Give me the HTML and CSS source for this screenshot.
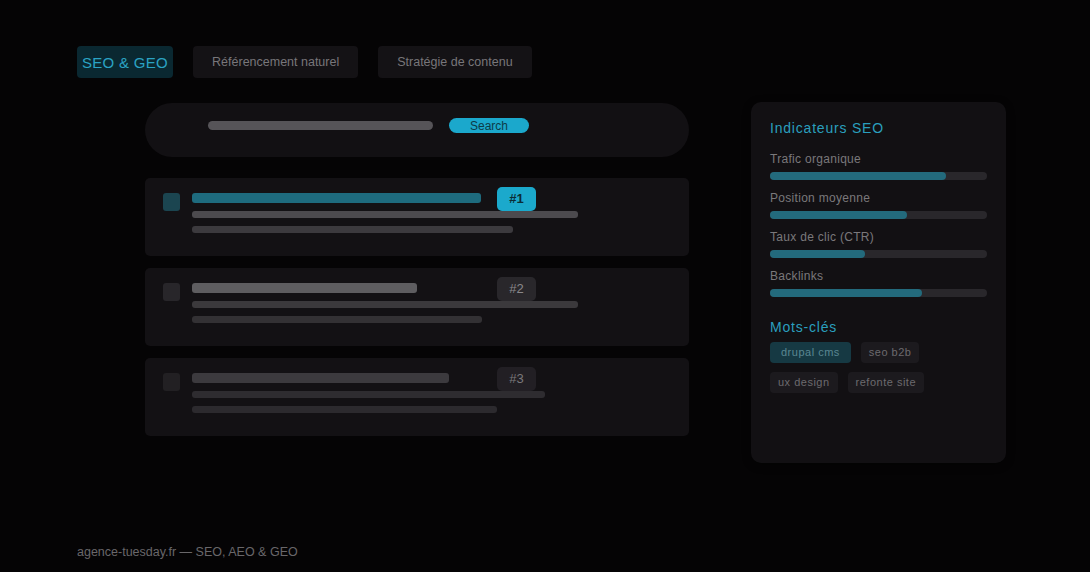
FILE: index.html
```html
<!DOCTYPE html>
<html lang="fr">
<head>
    <meta charset="UTF-8">
    <meta name="viewport" content="width=device-width, initial-scale=1.0">
    <title>SEO &amp; GEO — agence-tuesday.fr</title>
    <link rel="stylesheet" href="styles.css">
</head>
<body>
    <!-- Onglets -->
    <nav class="tabs">
        <span class="tab active">SEO &amp; GEO</span>
        <span class="tab">Référencement naturel</span>
        <span class="tab">Stratégie de contenu</span>
    </nav>

    <div class="layout">
        <!-- Résultats de recherche -->
        <main class="serp">
            <div class="searchbar">
                <span class="query"></span>
                <span class="search-btn">Search</span>
            </div>

            <div class="result first">
                <span class="favicon"></span>
                <div class="result-body">
                    <div class="result-head">
                        <span class="line title" style="width: 289px"></span>
                        <span class="rank">#1</span>
                    </div>
                    <span class="line desc" style="width: 386px"></span>
                    <span class="line desc2" style="width: 321px"></span>
                </div>
            </div>

            <div class="result second">
                <span class="favicon"></span>
                <div class="result-body">
                    <div class="result-head">
                        <span class="line title" style="width: 225px"></span>
                        <span class="rank">#2</span>
                    </div>
                    <span class="line desc" style="width: 386px"></span>
                    <span class="line desc2" style="width: 290px"></span>
                </div>
            </div>

            <div class="result third">
                <span class="favicon"></span>
                <div class="result-body">
                    <div class="result-head">
                        <span class="line title" style="width: 257px"></span>
                        <span class="rank">#3</span>
                    </div>
                    <span class="line desc" style="width: 353px"></span>
                    <span class="line desc2" style="width: 305px"></span>
                </div>
            </div>
        </main>

        <!-- Indicateurs -->
        <aside class="panel">
            <h3>Indicateurs SEO</h3>
            <div class="metrics">
                <div class="metric">
                    <span class="metric-label">Trafic organique</span>
                    <div class="bar"><div class="fill" style="width: 81%"></div></div>
                </div>
                <div class="metric">
                    <span class="metric-label">Position moyenne</span>
                    <div class="bar"><div class="fill" style="width: 63%"></div></div>
                </div>
                <div class="metric">
                    <span class="metric-label">Taux de clic (CTR)</span>
                    <div class="bar"><div class="fill" style="width: 44%"></div></div>
                </div>
                <div class="metric">
                    <span class="metric-label">Backlinks</span>
                    <div class="bar"><div class="fill" style="width: 70%"></div></div>
                </div>
            </div>

            <h3 class="keywords-title">Mots-clés</h3>
            <div class="tags">
                <span class="tag active">drupal cms</span>
                <span class="tag">seo b2b</span>
                <span class="tag">ux design</span>
                <span class="tag">refonte site</span>
            </div>
        </aside>
    </div>

    <footer>agence-tuesday.fr — SEO, AEO &amp; GEO</footer>
</body>
</html>
```

FILE: styles.css
```css
body {
    font-family: 'Liberation Sans', Arial, sans-serif;
    margin: 0;
    padding: 46px 0 0 77px;
    background: #050405;
    color: #7a787b;
    height: 100vh;
    box-sizing: border-box;
    display: flex;
    flex-direction: column;
    overflow: hidden;
}

/* Onglets */
.tabs {
    display: flex;
    gap: 20px;
}

.tab {
    height: 32px;
    padding: 0 19px;
    display: flex;
    align-items: center;
    border-radius: 4px;
    background: #141215;
    font-size: 12.5px;
    color: #78767a;
}

.tab.active {
    padding: 0 5px;
    background: #0a2831;
    font-size: 15px;
    letter-spacing: 0.3px;
    color: #2aa3c4;
}

.layout {
    display: flex;
    align-items: flex-start;
    gap: 62px;
    margin: 24px 0 0 68px;
}

/* Résultats */
.serp {
    width: 544px;
    display: flex;
    flex-direction: column;
    gap: 12px;
}

.searchbar {
    height: 54px;
    box-sizing: border-box;
    padding: 15px 0 0 63px;
    margin-top: 1px;
    margin-bottom: 9px;
    border-radius: 27px;
    background: #121013;
    display: flex;
    align-items: flex-start;
    gap: 16px;
}

.query {
    width: 225px;
    height: 9px;
    margin-top: 3px;
    border-radius: 5px;
    background: #565458;
}

.search-btn {
    width: 80px;
    height: 15px;
    border-radius: 8px;
    background: #1ba8cc;
    color: #0d3b48;
    font-size: 12px;
    line-height: 16px;
    text-align: center;
}

.result {
    height: 78px;
    box-sizing: border-box;
    padding: 9px 18px;
    border-radius: 5px;
    background: #131114;
    display: grid;
    grid-template-columns: 17px 1fr;
    gap: 12px;
}

.favicon {
    width: 17px;
    height: 18px;
    margin-top: 6px;
    border-radius: 3px;
    background: #28262a;
}

.result-body {
    display: flex;
    flex-direction: column;
}

.result-head {
    height: 24px;
    display: grid;
    grid-template-columns: 305px auto;
    align-items: center;
}

.line {
    display: block;
    border-radius: 3px;
}

.line.title {
    height: 10px;
    margin-bottom: 2px;
}

.line.desc {
    height: 7px;
}

.line.desc2 {
    height: 7px;
    margin-top: 8px;
}

.rank {
    width: 39px;
    height: 24px;
    border-radius: 5px;
    font-size: 13px;
    line-height: 24px;
    text-align: center;
}

.result.first .favicon { background: #1b4550; }
.result.first .title { background: #1e6b7e; }
.result.first .desc { background: #4c4a4e; }
.result.first .desc2 { background: #3c3a3e; }
.result.first .rank {
    background: #1ba9cc;
    color: #0b2d37;
    font-weight: bold;
}

.result.second .title { background: #5e5d60; }
.result.second .desc { background: #3b393c; }
.result.second .desc2 { background: #333134; }
.result.second .rank {
    background: #29272b;
    color: #8a888b;
}

.result.third .favicon { background: #222023; }
.result.third .title { background: #3c3a3e; }
.result.third .desc { background: #2e2c30; }
.result.third .desc2 { background: #2c2a2e; }
.result.third .rank {
    background: #221f24;
    color: #7a787b;
}

/* Panneau indicateurs */
.panel {
    width: 255px;
    height: 361px;
    box-sizing: border-box;
    padding: 17px 19px;
    border-radius: 10px;
    background: #121013;
    box-shadow: 0 2px 8px rgba(0, 0, 0, 0.4);
}

.panel h3 {
    margin: 0;
    font-size: 14px;
    font-weight: normal;
    line-height: 18px;
    letter-spacing: 0.8px;
    color: #2a9fbe;
}

.metrics {
    display: flex;
    flex-direction: column;
    gap: 11px;
    margin-top: 15px;
}

.metric-label {
    display: block;
    font-size: 12px;
    line-height: 14px;
    letter-spacing: 0.3px;
    color: #7a787b;
}

.bar {
    height: 8px;
    margin-top: 6px;
    border-radius: 4px;
    background: #29272b;
}

.fill {
    height: 100%;
    border-radius: 4px;
    background: #236a7c;
}

.panel h3.keywords-title {
    margin-top: 21px;
}

.tags {
    display: flex;
    flex-wrap: wrap;
    gap: 9px 10px;
    margin-top: 6px;
    width: 170px;
}

.tag {
    height: 21px;
    padding: 0 8px;
    border-radius: 4px;
    background: #1c1a1e;
    font-size: 11px;
    line-height: 21px;
    letter-spacing: 0.5px;
    color: #6c6a6e;
}

.tag.active {
    padding: 0 11px;
    background: #163943;
    color: #5a8792;
}

footer {
    margin-top: auto;
    padding-bottom: 13px;
    font-size: 12.5px;
    line-height: 14px;
    color: #69676a;
}
```
